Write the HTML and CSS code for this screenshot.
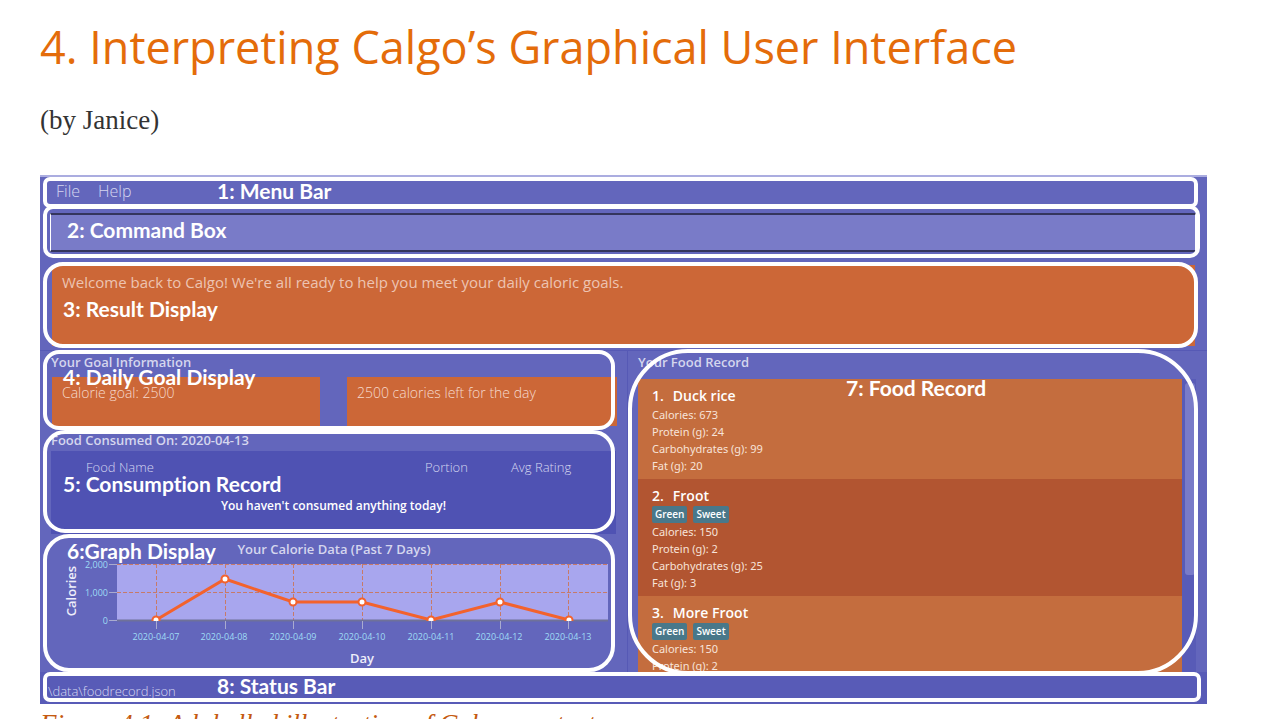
FILE: index.html
```html
<!DOCTYPE html>
<html lang="en">
<head>
<meta charset="utf-8">
<title>Calgo User Guide</title>
<link rel="stylesheet" href="styles.css">
</head>
<body>
<main class="page">
  <h1 class="title">4. Interpreting Calgo’s Graphical User Interface</h1>
  <p class="author">(by Janice)</p>
  <figure class="figure">
    <div class="app">
      <nav class="menu">
        <button class="menu-item" type="button">File</button>
        <button class="menu-item" type="button">Help</button>
        <div class="note note-menu"><span>1: Menu Bar</span></div>
      </nav>
      <section class="command">
        <input class="command-input" id="command" type="text">
        <div class="note note-command"><label for="command">2: Command Box</label></div>
      </section>
      <section class="result">
        <p class="result-box">Welcome back to Calgo! We're all ready to help you meet your daily caloric goals.</p>
        <div class="note note-result"><span>3: Result Display</span></div>
      </section>
      <div class="panels">
        <div class="left">
          <section class="goal">
            <h2 class="heading">Your Goal Information</h2>
            <div class="goal-boxes">
              <p class="goal-box">Calorie goal: 2500</p>
              <p class="goal-box">2500 calories left for the day</p>
            </div>
            <div class="note note-goal"><span>4: Daily Goal Display</span></div>
          </section>
          <section class="consumed">
            <h2 class="heading">Food Consumed On: 2020-04-13</h2>
            <table class="consumed-table">
              <thead><tr><th class="col-name">Food Name</th><th class="col-portion">Portion</th><th>Avg Rating</th></tr></thead>
              <tbody><tr><td colspan="3">You haven't consumed anything today!</td></tr></tbody>
            </table>
            <div class="note note-consumed"><span>5: Consumption Record</span></div>
          </section>
          <section class="graph">
            <svg class="chart" viewBox="0 0 587 138" role="img" aria-label="Your Calorie Data (Past 7 Days)">
              <text class="chart-title" x="294" y="20">Your Calorie Data (Past 7 Days)</text>
              <rect class="plot" x="77" y="30" width="491" height="56"/>
              <path class="grid" d="M77 30.500H568M77 58.500H568M116.500 30V86M185.500 30V86M253.500 30V86M322.500 30V86M391.500 30V86M460.500 30V86M528.500 30V86"/>
              <path class="axis" d="M77 86.500H568"/>
              <path class="tick" d="M69 30.500h8M69 58.500h8M69 86.500h8M116.500 87v8M185.500 87v8M253.500 87v8M322.500 87v8M391.500 87v8M460.500 87v8M528.500 87v8"/>
              <clipPath id="plot-area"><rect x="77" y="30" width="491" height="57"/></clipPath>
              <g clip-path="url(#plot-area)">
                <path class="line" d="M116 86L185 45L253 68H322L391 86L460 68L529 86"/>
                <g class="dots"><circle cx="116" cy="86" r="3.500"/><circle cx="185" cy="45" r="3.500"/><circle cx="253" cy="68" r="3.500"/><circle cx="322" cy="68" r="3.500"/><circle cx="391" cy="86" r="3.500"/><circle cx="460" cy="68" r="3.500"/><circle cx="529" cy="86" r="3.500"/></g>
              </g>
              <g class="y-labels"><text x="68" y="34">2,000</text><text x="68" y="62">1,000</text><text x="68" y="90">0</text></g>
              <g class="x-labels"><text x="116" y="106">2020-04-07</text><text x="184" y="106">2020-04-08</text><text x="253" y="106">2020-04-09</text><text x="322" y="106">2020-04-10</text><text x="391" y="106">2020-04-11</text><text x="459" y="106">2020-04-12</text><text x="528" y="106">2020-04-13</text></g>
              <text class="axis-name" transform="translate(36 57) rotate(-90)">Calories</text>
              <text class="axis-name axis-day" x="322" y="129">Day</text>
            </svg>
            <div class="note note-graph"><span>6:Graph Display</span></div>
          </section>
        </div>
        <section class="record">
          <h2 class="heading">Your Food Record</h2>
          <div class="list">
            <div class="items">
              <article class="item">
                <h3 class="name"><span>1.</span>Duck rice</h3>
                <p>Calories: 673</p><p>Protein (g): 24</p><p>Carbohydrates (g): 99</p><p>Fat (g): 20</p>
              </article>
              <article class="item item-dark">
                <h3 class="name"><span>2.</span>Froot</h3>
                <div class="tags"><span class="tag">Green</span><span class="tag">Sweet</span></div>
                <p>Calories: 150</p><p>Protein (g): 2</p><p>Carbohydrates (g): 25</p><p>Fat (g): 3</p>
              </article>
              <article class="item">
                <h3 class="name"><span>3.</span>More Froot</h3>
                <div class="tags"><span class="tag">Green</span><span class="tag">Sweet</span></div>
                <p>Calories: 150</p><p>Protein (g): 2</p>
              </article>
            </div>
            <div class="track"><div class="thumb"></div></div>
          </div>
          <div class="note note-record"><span>7: Food Record</span></div>
        </section>
      </div>
      <footer class="status">
        <span>\data\foodrecord.json</span>
        <div class="note note-status"><span>8: Status Bar</span></div>
      </footer>
    </div>
    <figcaption class="caption">Figure 4.1: A labelled illustration of Calgo on startup</figcaption>
  </figure>
</main>
</body>
</html>
```
FILE: styles.css
```css
* { box-sizing: border-box; }
body { margin: 0; height: 100vh; overflow: hidden; background: #fff; }
h1, h2, h3, p, figure { margin: 0; }

.page { padding: 15px 70px 0 40px; }
.title { font: 400 45px/64px "Open Sans", sans-serif; color: #e46c0a; }
.author { margin: 24px 0 38px; font: 27px/34px "Liberation Serif", serif; color: #333; }

.app {
  display: flex;
  flex-direction: column;
  background: #6366bc;
  color: #d5d6ee;
  font-family: "Open Sans", "Noto Sans", sans-serif;
}

/* Numbered outlines laid over each part of the window */
.note {
  position: absolute;
  z-index: 1;
  border: 4px solid #fff;
  color: #fff;
  font: 700 21px/24px Lato, sans-serif;
  font-variant-ligatures: none;
  pointer-events: none;
}
.note-menu { inset: 0 9px 0 3px; padding-left: 170px; line-height: 20px; border-radius: 7px; }
.note-command { inset: -3px 7px 0 3px; padding: 9px 20px; border-radius: 10px; }
.note-result { inset: 4px 9px 2px 3px; padding: 31px 16px; border-radius: 20px; }
.note-goal { inset: -1px 12px 0 3px; padding: 11px 16px; border-radius: 16px; }
.note-consumed { inset: 0 12px 1px 3px; padding: 38px 16px; border-radius: 22px; }
.note-graph { inset: 0 12px 0 3px; padding: 1px 20px; border-radius: 26px; }
.note-record { inset: -2px 9px -3px 0; padding: 23px 0 0 214px; border-radius: 60px; }
.note-status { inset: 0 6px 2px 3px; padding-left: 170px; line-height: 20px; border-radius: 7px; }

.menu { position: relative; display: flex; gap: 18px; height: 33px; padding: 0 16px 3px; border-top: 2px solid #abade0; }
.menu-item { padding: 0; border: 0; background: none; color: #d5d6f0; font: 300 16px/26px "Open Sans", sans-serif; }

.command { position: relative; height: 50px; padding: 5px 11px 6px 10px; }
.command-input {
  display: block;
  width: 100%;
  height: 39px;
  border: solid #34355c;
  border-width: 2px 1px;
  border-left-color: #fff;
  border-right-color: #fff;
  background: #797bc8;
  color: #fff;
}

.result { position: relative; height: 93px; padding: 7px 12px 5px; border-bottom: 1px solid #5659b5; }
.result-box { height: 81px; padding: 5px 10px; background: #cc6737; color: #edc4b2; font-size: 15px; line-height: 24px; }

.panels { display: grid; grid-template-columns: 587fr 580fr; height: 321px; }
.heading { font-weight: 600; font-size: 13px; line-height: 20px; }

.goal { position: relative; height: 79px; padding: 2px 10px 0 12px; }
.goal .heading, .consumed .heading { margin-top: -1px; margin-bottom: 1px; }
.goal .heading { margin-left: -1px; }
.goal-boxes { display: grid; grid-template-columns: 268fr 270fr; gap: 27px; margin-top: 5px; }
.goal-box { height: 49px; padding: 6px 10px; background: #cc6737; color: #f6dacd; font-weight: 300; font-size: 14px; line-height: 20px; }

.consumed { position: relative; height: 104px; padding: 1px 11px 0; }
.consumed-table { width: 100%; height: 83px; border-collapse: collapse; background: #4f52b3; table-layout: fixed; }
.consumed-table th { padding: 0; height: 32px; font-weight: 300; font-size: 13px; line-height: 20px; text-align: left; color: #d5d6f0; }
.consumed-table .col-name { width: 374px; padding-left: 35px; }
.consumed-table .col-portion { width: 86px; }
.consumed-table td { padding: 13px 0 0; vertical-align: top; text-align: center; font-weight: 600; font-size: 12px; line-height: 20px; color: #fff; }

.graph { position: relative; height: 138px; }
.chart { display: block; width: 100%; font-family: "Open Sans", sans-serif; }
.chart-title { font-weight: 600; font-size: 13px; fill: #d5d6ee; text-anchor: middle; }
.plot { fill: #a8a6ee; }
.grid { stroke: #c77a68; stroke-dasharray: 4 2; }
.axis { stroke: #6f7199; stroke-width: 2; }
.tick { stroke: #a9abcf; }
.line { fill: none; stroke: #f3622d; stroke-width: 3; }
.dots { fill: #fff; stroke: #f3622d; stroke-width: 2; }
.y-labels, .x-labels { font-size: 9px; fill: #9fdcf5; }
.y-labels { text-anchor: end; }
.x-labels { text-anchor: middle; }
.axis-name { font-weight: 600; font-size: 13px; fill: #eeeefa; text-anchor: middle; }

.record { position: relative; padding: 2px 11px 0 10px; border-left: 1px solid #5659b5; }
.record .heading { margin-top: -1px; margin-bottom: 7px; }
.list { display: grid; grid-template-columns: 1fr 14px; height: 293px; overflow: hidden; }
.items { height: 293px; overflow: hidden; }
.item { padding: 8px 14px 5px; background: #c46d3e; color: #f7e3d9; font-family: "Noto Sans", sans-serif; font-size: 11px; line-height: 17px; }
.item-dark { background: #b25531; }
.name { display: flex; gap: 9px; margin-bottom: 1px; font-weight: 600; font-size: 14px; line-height: 18px; font-family: "Open Sans", sans-serif; color: #fff; }
.tags { display: flex; gap: 6px; }
.tag { padding: 0 3px; border-radius: 2px; background: #49788a; color: #fff; font-family: "Open Sans", sans-serif; font-weight: 600; font-size: 10px; line-height: 17px; }
.track { height: 293px; padding: 4px 1px 0 3px; background: #585bb7; }
.thumb { height: 192px; border-radius: 3px; background: #797bc8; }

.status { position: relative; height: 32px; padding: 9px 8px 0; background: #585bb7; color: #d5d6f0; font-weight: 300; font-size: 13px; line-height: 20px; }
.caption { margin-top: 3px; font: italic 27px/34px "Liberation Serif", serif; color: #c55a11; }
```
